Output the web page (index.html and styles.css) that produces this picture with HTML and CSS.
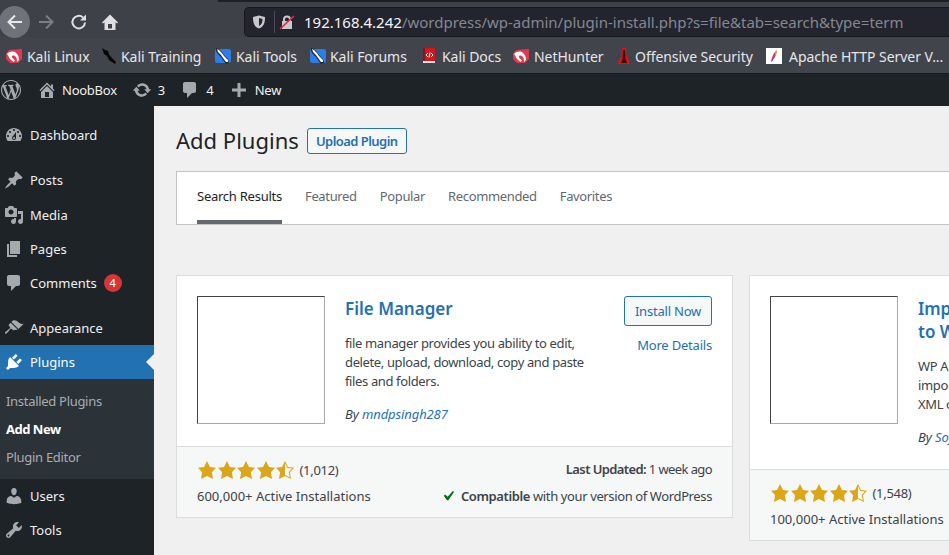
FILE: index.html
```html
<!DOCTYPE HTML>
<html>
	<head>
		<meta charset="utf-8">
		<title>Add Plugins</title>
		<link rel="stylesheet" href="styles.css">
	</head>
	<body>
		<div class="toolbar">
			<div class="nav-btns">
				<span class="back-btn">
					<svg viewBox="0 0 20 20" width="20" height="20"><path d="M17 10H4M10 3.500L3.500 10l6.500 6.500" fill="none" stroke="#e8e8ea" stroke-width="2"/></svg>
				</span>
				<svg class="fwd" viewBox="0 0 20 20" width="20" height="20"><path d="M3 10h13M10 3.500l6.500 6.500-6.500 6.500" fill="none" stroke="#7c7e84" stroke-width="2"/></svg>
				<svg class="reload" viewBox="0 0 20 20" width="20" height="20"><path d="M16 10.500a6.300 6.300 0 1 1-2-5" fill="none" stroke="#e0e0e3" stroke-width="2"/><path d="M17 2.500v6h-6z" fill="#e0e0e3"/></svg>
				<svg class="home" viewBox="0 0 20 20" width="20" height="20"><path d="M10 2.500L2 10.500l1 1 1.500-1.300V18h11v-7.800l1.500 1.300 1-1zM8 16.500V12h4v4.500z" fill="#e0e0e3"/></svg>
			</div>
			<div class="urlbar">
				<svg class="shield" viewBox="0 0 16 16" width="16" height="16"><path d="M8 1.500L2 3c0 6 1 9.500 6 11.500C13 12.500 14 9 14 3zM8 4l3.500.9c0 3.500-.8 5.700-3.500 7z" fill="#c8c8cc" fill-rule="evenodd"/></svg>
				<span class="url-sep"></span>
				<svg class="lock" viewBox="0 0 16 16" width="16" height="16"><path d="M4 7V5.500a4 4 0 0 1 8 0V7h1v8H3V7zM6 7h4V5.500a2 2 0 0 0-4 0z" fill="#c8c8cc" fill-rule="evenodd"/><path d="M1 15L15 2" stroke="#e22850" stroke-width="1.700"/></svg>
				<span class="url"><b>192.168.4.242</b>/wordpress/wp-admin/plugin-install.php?s=file&amp;tab=search&amp;type=term</span>
			</div>
		</div>

		<div class="bookmarks">
			<span class="bm bm-linux"><svg viewBox="0 0 16 16" width="16" height="16"><path d="M3 2l13-1v10l-4 4H4L0 11V6z" fill="#e0394f"/><path d="M1 6c3-3 7-3 9-1 2 1.500 3 4 3 7l-2 2c0-4-1-6-3-6.500C6 7 5 9 7 10.500l2 2-1.500 1.500L4 11c-1.500-2-1.500-3.500-3-5z" fill="#fff"/></svg>Kali Linux</span>
			<span class="bm bm-training"><svg viewBox="0 0 16 16" width="16" height="16"><path d="M1 0l3 2 3 1 1 3 2 3 5 5-1 2-6-4-2-4-3-2-1-3z" fill="#050505"/></svg>Kali Training</span>
			<span class="bm bm-tools"><svg viewBox="0 0 16 16" width="16" height="16"><rect y="1" width="16" height="14" rx="2" fill="#2b7de9"/><path d="M1 0l3 1 3 3 2 3 4 4 1 4-3 1-3-4-2-3-3-3-2-3z" fill="#23262c"/><path d="M2 1l2 1 3 3 2 3 4 4 0 2-2 0-3-4-2-3-3-3z" fill="#fff"/></svg>Kali Tools</span>
			<span class="bm bm-forums"><svg viewBox="0 0 16 16" width="16" height="16"><rect y="1" width="16" height="14" rx="2" fill="#2b7de9"/><path d="M1 0l3 1 3 3 2 3 4 4 1 4-3 1-3-4-2-3-3-3-2-3z" fill="#23262c"/><path d="M2 1l2 1 3 3 2 3 4 4 0 2-2 0-3-4-2-3-3-3z" fill="#fff"/></svg>Kali Forums</span>
			<span class="bm bm-docs"><svg viewBox="0 0 16 16" width="16" height="16"><path d="M2 0h12v13H2z" fill="#d3171f"/><path d="M2 0h2v13H2z" fill="#8e1117"/><path d="M2 13h12v2H2z" fill="#e4e4e6"/><path d="M7 5L5 7l2 2M10 5l2 2-2 2M9 4.500L8 9.500" fill="none" stroke="#fff"/></svg>Kali Docs</span>
			<span class="bm bm-hunter"><svg viewBox="0 0 16 16" width="16" height="16"><path d="M3 2l13-1v10l-4 4H4L0 11V6z" fill="#e0394f"/><path d="M1 6c3-3 7-3 9-1 2 1.500 3 4 3 7l-2 2c0-4-1-6-3-6.500C6 7 5 9 7 10.500l2 2-1.500 1.500L4 11c-1.500-2-1.500-3.500-3-5z" fill="#fff"/></svg>NetHunter</span>
			<span class="bm bm-offsec"><svg viewBox="0 0 16 16" width="16" height="16"><path d="M6 0h4l.5 8L14 14v2H2v-2l3.500-6z" fill="#d9141c"/><path d="M7 2h2l.5 9 1.500 4H5l1.500-4z" fill="#4a0608"/></svg>Offensive Security</span>
			<span class="bm bm-apache"><svg viewBox="0 0 16 16" width="16" height="16"><path d="M0 0h16v16H0z" fill="#fff"/><path d="M11 2C8 4 6 8 5 14c2-2 4.500-5 5-8z" fill="#d9305a"/><path d="M11 2L9 4.500 9 7l2-2z" fill="#f59a23"/><path d="M6.500 10L5 14l2-2z" fill="#7a2a8a"/></svg>Apache HTTP Server V...</span>
		</div>

		<div class="adminbar">
			<svg class="ab-wp" viewBox="0 0 20 20" width="20" height="20"><path d="M20 10c0-5.510-4.490-10-10-10C4.480 0 0 4.490 0 10c0 5.520 4.480 10 10 10 5.510 0 10-4.480 10-10zM7.780 15.370L4.370 6.220c.55-.02 1.170-.08 1.170-.08.5-.06.44-1.130-.06-1.110 0 0-1.450.11-2.370.11-.18 0-.37 0-.58-.01C4.120 2.690 6.870 1.110 10 1.110c2.330 0 4.450.87 6.050 2.340-.68-.11-1.650.39-1.650 1.580 0 .74.45 1.360.9 2.100.35.61.55 1.360.55 2.460 0 1.490-1.400 5-1.400 5l-3.030-8.370c.54-.02.82-.17.82-.17.5-.05.44-1.250-.06-1.220 0 0-1.440.12-2.380.12-.87 0-2.330-.12-2.330-.12-.5-.03-.56 1.200-.06 1.220l.92.08 1.260 3.410zM17.410 10c.24-.64.74-1.870.43-4.250.7 1.290 1.050 2.710 1.050 4.250 0 3.290-1.730 6.240-4.400 7.780.97-2.590 1.940-5.200 2.920-7.780zM6.100 18.090C3.120 16.650 1.110 13.530 1.110 10c0-1.300.23-2.480.72-3.590C3.250 10.300 4.670 14.200 6.100 18.090zm4.030-6.630l2.580 6.980c-.86.29-1.760.45-2.710.45-.79 0-1.570-.11-2.290-.33.81-2.380 1.620-4.740 2.420-7.100z"/></svg>
			<span class="ab-item ab-site"><svg viewBox="0 0 20 20" width="20" height="20"><path d="M16 8.500l1.530 1.530-1.060 1.060L10 4.620l-6.470 6.470-1.060-1.060L10 2.500l4 4v-2h2v4zm-6-2.460l6 5.990V18H4v-5.970zM12 17v-5H8v5h4z"/></svg>NoobBox</span>
			<span class="ab-item ab-updates"><svg viewBox="0 0 20 20" width="20" height="20"><path d="M10.200 3.280c3.530 0 6.430 2.610 6.920 6h2.080l-3.500 4-3.500-4h2.320c-.45-1.970-2.210-3.450-4.320-3.450-1.450 0-2.730.71-3.540 1.780L4.950 5.660C6.230 4.200 8.110 3.280 10.200 3.280zm-.4 13.440c-3.520 0-6.430-2.610-6.920-6H.8l3.500-4c1.170 1.330 2.330 2.670 3.500 4H5.480c.45 1.970 2.210 3.450 4.320 3.450 1.450 0 2.730-.71 3.540-1.780l1.710 1.950c-1.280 1.460-3.150 2.380-5.250 2.380z"/></svg>3</span>
			<span class="ab-item ab-comments"><svg viewBox="0 0 20 20" width="20" height="20"><path d="M5 2h9c1.100 0 2 .9 2 2v7c0 1.100-.9 2-2 2h-2l-5 5v-5H5c-1.100 0-2-.9-2-2V4c0-1.100.9-2 2-2z"/></svg>4</span>
			<span class="ab-item ab-new"><svg viewBox="0 0 20 20" width="20" height="20"><path d="M17 8.500v3h-5.500V17h-3v-5.500H3v-3h5.500V3h3v5.500z"/></svg>New</span>
		</div>

		<div class="wrap">
			<ul class="menu">
				<li class="menu-item sep-after">
					<svg viewBox="0 0 20 20" width="20" height="20"><path d="M3.760 16h12.480c1.100-1.370 1.760-3.110 1.760-5 0-4.420-3.580-8-8-8s-8 3.580-8 8c0 1.890.66 3.630 1.760 5zM10 4c.55 0 1 .45 1 1s-.45 1-1 1-1-.45-1-1 .45-1 1-1zM6 6c.55 0 1 .45 1 1s-.45 1-1 1-1-.45-1-1 .45-1 1-1zm8 0c.55 0 1 .45 1 1s-.45 1-1 1-1-.45-1-1 .45-1 1-1zm-5.370 5.550L12 7v6c0 1.100-.9 2-2 2s-2-.9-2-2c0-.57.24-1.080.63-1.450zM4 10c.55 0 1 .45 1 1s-.45 1-1 1-1-.45-1-1 .45-1 1-1zm12 0c.55 0 1 .45 1 1s-.45 1-1 1-1-.45-1-1 .45-1 1-1zm-5 3c0-.55-.45-1-1-1s-1 .45-1 1 .45 1 1 1 1-.45 1-1z" fill-rule="evenodd"/></svg>
					Dashboard
				</li>
				<li class="menu-item posts">
					<svg viewBox="0 0 20 20" width="20" height="20"><path d="M10.440 3.020l1.820-1.820 6.360 6.350-1.830 1.820c-1.050-.68-2.480-.57-3.410.36l-.75.75c-.92.93-1.040 2.350-.35 3.410l-1.830 1.820-2.410-2.410-2.800 2.790c-.42.42-3.380 2.710-3.800 2.290s1.860-3.390 2.280-3.810l2.790-2.790L4.100 9.360l1.830-1.820c1.050.69 2.480.57 3.400-.36l.75-.75c.93-.92 1.050-2.350.36-3.410z"/></svg>
					Posts
				</li>
				<li class="menu-item">
					<svg viewBox="0 0 20 20" width="20" height="20"><path d="M13 11V4c0-.55-.45-1-1-1h-1.670L9 1H5L3.670 3H2c-.55 0-1 .45-1 1v7c0 .55.45 1 1 1h10c.55 0 1-.45 1-1zM7 4.500c1.380 0 2.500 1.120 2.500 2.500S8.380 9.500 7 9.500 4.500 8.380 4.500 7 5.620 4.500 7 4.500zM14 6h5v10.500c0 1.380-1.120 2.500-2.500 2.500S14 17.880 14 16.500s1.120-2.500 2.500-2.500c.17 0 .34.02.5.05V9h-3V6zm-4 8.050V13h2v3.500c0 1.380-1.120 2.500-2.500 2.500S7 17.880 7 16.500 8.120 14 9.500 14c.17 0 .34.02.5.05z"/></svg>
					Media
				</li>
				<li class="menu-item">
					<svg viewBox="0 0 20 20" width="20" height="20"><path d="M6 15V2h10v13H6zm-1 1h8v2H3V5h2v11z"/></svg>
					Pages
				</li>
				<li class="menu-item sep-after">
					<svg viewBox="0 0 20 20" width="20" height="20"><path d="M5 2h9c1.100 0 2 .9 2 2v7c0 1.100-.9 2-2 2h-2l-5 5v-5H5c-1.100 0-2-.9-2-2V4c0-1.100.9-2 2-2z"/></svg>
					Comments <span class="badge">4</span>
				</li>
				<li class="menu-item">
					<svg viewBox="0 0 20 20" width="20" height="20"><path d="M14.480 11.060L7.410 3.990l1.500-1.500c.5-.56 2.300-.47 3.510.32 1.210.8 1.430 1.280 2.910 2.100 1.180.64 2.450 1.260 4.450.85zm-.71.71L6.700 4.700 4.930 6.470c-.39.39-.39 1.020 0 1.410l1.060 1.060c.39.39.39 1.030 0 1.420-.6.6-1.430 1.110-2.210 1.690-.35.26-.7.53-1.010.84C1.430 13.230.4 14.890 1.100 15.590c.7.7 2.300-.4 3.140-1.730.24-.37.48-.74.71-1.100.39-.61.86-1.190 1.450-1.750.39-.39 1.020-.39 1.410 0l1.060 1.060c.39.39 1.020.39 1.410 0z"/></svg>
					Appearance
				</li>
				<li class="menu-item current">
					<svg viewBox="0 0 20 20" width="20" height="20"><path d="M13.110 4.360L9.870 7.600 8 5.730l3.240-3.240c.35-.34 1.050-.2 1.560.32.52.51.66 1.210.31 1.550zm-8 1.770l.91-1.120 9.010 9.010-1.190.84c-.71.71-2.630 1.160-3.820 1.160H6.140L4.900 17.260c-.59.59-1.540.59-2.120 0-.59-.58-.59-1.530 0-2.120l1.240-1.240v-3.880c0-1.130.4-3.190 1.090-3.890zm7.260 3.970l3.240-3.240c.34-.35 1.040-.21 1.550.31.52.51.66 1.210.31 1.550l-3.240 3.250z"/></svg>
					Plugins
				</li>
				<li class="submenu">
					<a>Installed Plugins</a>
					<a class="active">Add New</a>
					<a>Plugin Editor</a>
				</li>
				<li class="menu-item">
					<svg viewBox="0 0 20 20" width="20" height="20"><path d="M10 9.250c-2.270 0-2.730-3.440-2.730-3.440C7 4.020 7.820 2 9.970 2c2.160 0 2.980 2.020 2.710 3.810 0 0-.41 3.440-2.680 3.440zm0 2.570L12.720 10c2.390 0 4.520 2.330 4.520 4.530v2.490s-3.650 1.130-7.240 1.130c-3.650 0-7.240-1.130-7.240-1.130v-2.490c0-2.250 1.940-4.480 4.470-4.480z"/></svg>
					Users
				</li>
				<li class="menu-item">
					<svg viewBox="0 0 20 20" width="20" height="20"><path d="M16.680 9.770c-1.340 1.340-3.300 1.670-4.950.99l-5.410 6.520c-.99.99-2.590.99-3.580 0s-.99-2.590 0-3.570l6.520-5.420c-.68-1.650-.35-3.610.99-4.950 1.280-1.280 3.120-1.620 4.720-1.060l-2.890 2.890 2.820 2.820 2.860-2.870c.53 1.580.18 3.390-1.080 4.650zM3.810 16.210c.4.39 1.040.39 1.430 0 .4-.4.4-1.040 0-1.430-.39-.4-1.030-.4-1.430 0-.39.39-.39 1.030 0 1.430z"/></svg>
					Tools
				</li>
			</ul>

			<div class="content">
				<div class="heading">
					<h1>Add Plugins</h1>
					<a class="btn-upload">Upload Plugin</a>
				</div>
				<div class="tabs">
					<a class="tab current">Search Results</a>
					<a class="tab">Featured</a>
					<a class="tab">Popular</a>
					<a class="tab">Recommended</a>
					<a class="tab">Favorites</a>
				</div>

				<div class="cards">
					<div class="card">
						<div class="card-top">
							<div class="thumb"></div>
							<div class="card-info">
								<h3>File Manager</h3>
								<p>file manager provides you ability to edit, delete, upload, download, copy and paste files and folders.</p>
								<p class="author">By <a>mndpsingh287</a></p>
							</div>
							<div class="actions">
								<a class="btn-install">Install Now</a>
								<a class="more">More Details</a>
							</div>
						</div>
						<div class="card-bottom">
							<div class="stats">
								<div class="rating">
									<svg viewBox="0 0 20 20"><path d="M10 1l3 6 6 .75-4.120 4.620L16 19l-6-3-6 3 1.130-6.630L1 7.750 7 7z"/></svg>
									<svg viewBox="0 0 20 20"><path d="M10 1l3 6 6 .75-4.120 4.620L16 19l-6-3-6 3 1.130-6.630L1 7.750 7 7z"/></svg>
									<svg viewBox="0 0 20 20"><path d="M10 1l3 6 6 .75-4.120 4.620L16 19l-6-3-6 3 1.130-6.630L1 7.750 7 7z"/></svg>
									<svg viewBox="0 0 20 20"><path d="M10 1l3 6 6 .75-4.120 4.620L16 19l-6-3-6 3 1.130-6.630L1 7.750 7 7z"/></svg>
									<svg viewBox="0 0 20 20"><path d="M10 1L7 7l-6 .75 4.130 4.620L4 19l6-3 6 3-1.120-6.630L19 7.750 13 7zm0 2.240l2.340 4.690 4.650.58-3.180 3.560.87 5.150L10 14.880V3.240z" fill-rule="evenodd"/></svg>
									<span class="count">(1,012)</span>
								</div>
								<div class="installs">600,000+ Active Installations</div>
							</div>
							<div class="meta">
								<div class="updated"><b>Last Updated:</b> 1 week ago</div>
								<div class="compat"><svg viewBox="0 0 20 20" width="20" height="20"><path d="M14.830 4.890l1.340.94-5.810 8.380H9.020L5.780 9.670l1.340-1.250 2.570 2.400z"/></svg><span><b>Compatible</b> with your version of WordPress</span></div>
							</div>
						</div>
					</div>

					<div class="card">
						<div class="card-top">
							<div class="thumb"></div>
							<div class="card-info">
								<h3>Import any XML or CSV File<br>to WordPress</h3>
								<p>WP All Import is an extremely powerful<br>importer that makes it easy to import any<br>XML or CSV file to WordPress.</p>
								<p class="author">By <a>Soflyy</a></p>
							</div>
						</div>
						<div class="card-bottom">
							<div class="stats">
								<div class="rating">
									<svg viewBox="0 0 20 20"><path d="M10 1l3 6 6 .75-4.120 4.620L16 19l-6-3-6 3 1.130-6.630L1 7.750 7 7z"/></svg>
									<svg viewBox="0 0 20 20"><path d="M10 1l3 6 6 .75-4.120 4.620L16 19l-6-3-6 3 1.130-6.630L1 7.750 7 7z"/></svg>
									<svg viewBox="0 0 20 20"><path d="M10 1l3 6 6 .75-4.120 4.620L16 19l-6-3-6 3 1.130-6.630L1 7.750 7 7z"/></svg>
									<svg viewBox="0 0 20 20"><path d="M10 1l3 6 6 .75-4.120 4.620L16 19l-6-3-6 3 1.130-6.630L1 7.750 7 7z"/></svg>
									<svg viewBox="0 0 20 20"><path d="M10 1L7 7l-6 .75 4.130 4.620L4 19l6-3 6 3-1.120-6.630L19 7.750 13 7zm0 2.240l2.340 4.690 4.650.58-3.180 3.560.87 5.150L10 14.880V3.240z" fill-rule="evenodd"/></svg>
									<span class="count">(1,548)</span>
								</div>
								<div class="installs">100,000+ Active Installations</div>
							</div>
						</div>
					</div>
				</div>
			</div>
		</div>
	</body>
</html>
```

FILE: styles.css
```css
* {
	box-sizing: border-box;
}

html, body {
	height: 100%;
}

body {
	margin: 0;
	overflow: hidden;
	display: flex;
	flex-direction: column;
	background: #f0f0f1;
	color: #3c434a;
	font-family: "Noto Sans", sans-serif;
	font-size: 13px;
}

/* browser */
.toolbar {
	height: 37px;
	flex: none;
	display: flex;
	background: #3f4148;
	border-top: 2px solid transparent;
	position: relative;
	z-index: 1;
}

.toolbar::before {
	content: "";
	position: absolute;
	left: 218px;
	right: 0;
	top: -2px;
	height: 2px;
	background: #1f2026;
}

.nav-btns {
	width: 244px;
	padding-top: 5px;
	display: flex;
	align-items: center;
}

.back-btn {
	width: 31px;
	height: 32px;
	flex: none;
	margin-left: -1px;
	border-radius: 50%;
	background: #70727a;
	display: flex;
	align-items: center;
	justify-content: center;
}

.fwd {
	margin-left: 6px;
}

.reload {
	margin-left: 13px;
}

.home {
	margin-left: 11px;
}

.urlbar {
	flex: 1;
	height: 30px;
	margin-top: 5px;
	display: flex;
	align-items: center;
	background: #23242d;
	border: 1px solid #17181d;
	border-right: 0;
	border-radius: 5px 0 0 5px;
	color: #858892;
	font-size: 15px;
	white-space: nowrap;
}

.shield {
	margin-left: 6px;
}

.url-sep {
	width: 1px;
	height: 22px;
	margin: 0 4px 0 7px;
	background: #4a4b54;
}

.url {
	margin-left: 9px;
}

.url b {
	font-weight: 400;
	color: #f4f4f6;
}

.bookmarks {
	height: 37px;
	flex: none;
	display: flex;
	align-items: center;
	padding-top: 2px;
	background: #42444c;
	border-bottom: 1px solid #17181d;
	color: #e6e7ea;
	font-size: 14px;
	letter-spacing: -.05px;
	white-space: nowrap;
}

.bm {
	display: flex;
	align-items: center;
	gap: 5px;
}

.bm-linux { margin-left: 6px; width: 95px; }
.bm-training { width: 114px; gap: 4px; }
.bm-tools { width: 95px; }
.bm-forums { width: 111px; gap: 4px; }
.bm-docs { width: 92px; }
.bm-hunter { width: 103px; }
.bm-offsec { width: 150px; gap: 3px; }
.bm-apache { gap: 7px; }

/* admin bar */
.adminbar {
	height: 32px;
	flex: none;
	display: flex;
	align-items: center;
	background: #1d2327;
	color: #f0f0f1;
	white-space: nowrap;
}

.adminbar svg {
	fill: #a7aaad;
}

.ab-wp {
	margin-left: 1px;
}

.ab-item {
	display: flex;
	align-items: center;
	gap: 6px;
}

.ab-site {
	margin-left: 16px;
	gap: 5px;
	letter-spacing: -.25px;
}

.ab-updates {
	margin-left: 15px;
}

.ab-comments {
	margin-left: 15px;
}

.ab-new {
	margin-left: 15px;
	letter-spacing: -.2px;
}

/* sidebar */
.wrap {
	flex: 1;
	display: flex;
	min-height: 0;
}

.menu {
	width: 154px;
	flex: none;
	margin: 0;
	padding: 12px 0 0;
	list-style: none;
	background: #1d2327;
	color: #f0f0f1;
}

.menu-item {
	height: 34px;
	display: flex;
	align-items: center;
	position: relative;
}

.menu-item svg {
	width: 20px;
	height: 20px;
	margin: 0 6px 0 4px;
	fill: #a7aaad;
	flex: none;
}

.sep-after {
	margin-bottom: 11px;
}

.posts {
	margin-bottom: 1px;
}

.current {
	background: #2271b1;
	color: #fff;
}

.current svg {
	fill: #fff;
}

.current::after {
	content: "";
	position: absolute;
	right: 0;
	top: 9px;
	border: 8px solid transparent;
	border-left: 0;
	border-right-color: #f0f0f1;
}

.badge {
	width: 18px;
	height: 18px;
	margin-left: 7px;
	border-radius: 50%;
	background: #d63638;
	color: #fff;
	font-size: 11px;
	line-height: 18px;
	text-align: center;
}

.submenu {
	height: 100px;
	padding-top: 8px;
	background: #2c3338;
	color: #a9acb0;
	letter-spacing: -.3px;
}

.submenu a {
	display: block;
	height: 28px;
	padding-left: 6px;
	line-height: 28px;
}

.submenu .active {
	color: #fff;
	font-weight: 700;
	letter-spacing: -.5px;
}

/* page */
.content {
	flex: 1;
	min-width: 0;
	padding: 0 0 0 22px;
	overflow: hidden;
}

.heading {
	height: 65px;
	display: flex;
	align-items: center;
	padding: 6px 0 1px;
}

h1 {
	margin: -2px 8px 0 0;
	color: #1d2327;
	font-size: 22px;
	font-weight: 400;
}

.btn-upload {
	width: 100px;
	height: 26px;
	border: 1px solid #2271b1;
	border-radius: 3px;
	background: #f6f7f7;
	color: #2271b1;
	font-weight: 600;
	line-height: 24px;
	letter-spacing: -.55px;
	text-align: center;
}

.tabs {
	height: 54px;
	display: flex;
	gap: 23px;
	padding-left: 20px;
	background: #fff;
	border: 1px solid #c3c4c7;
	border-right: 0;
	letter-spacing: -.35px;
}

.tab {
	padding-top: 15px;
	color: #646970;
	white-space: nowrap;
}

.tab.current {
	background: none;
	color: #1d2327;
	border-bottom: 4px solid #646970;
	letter-spacing: -.25px;
}

.cards {
	display: flex;
	align-items: flex-start;
	gap: 16px;
	margin-top: 50px;
}

.card {
	width: 557px;
	flex: none;
	background: #fff;
	border: 1px solid #dcdcde;
}

.card-top {
	display: flex;
	padding: 20px 20px 22px;
}

.thumb {
	width: 128px;
	height: 128px;
	flex: none;
	background: #fff;
	border: 1px solid;
	border-color: #444 #aaa #aaa #444;
}

.card-info {
	width: 259px;
	flex: none;
	margin-left: 20px;
	letter-spacing: -.37px;
}

h3 {
	margin: 1px 0 0;
	color: #2271b1;
	font-size: 17px;
	font-weight: 600;
	line-height: 23px;
	letter-spacing: 0;
	white-space: nowrap;
}

.card-info p {
	margin: 14px 0 0;
	line-height: 19px;
	white-space: nowrap;
}

.card-info p:not(.author) {
	white-space: normal;
}

.card-info .author {
	margin-top: 14px;
	font-style: italic;
	letter-spacing: -.1px;
}

.author a {
	color: #2271b1;
}

.actions {
	flex: 1;
	display: flex;
	flex-direction: column;
	align-items: flex-end;
	letter-spacing: -.2px;
}

.btn-install {
	width: 88px;
	height: 30px;
	border: 1px solid #2271b1;
	border-radius: 3px;
	background: #f6f7f7;
	color: #2271b1;
	line-height: 28px;
	text-align: center;
}

.more {
	margin-top: 10px;
	color: #2271b1;
}

.card-bottom {
	height: 71px;
	display: flex;
	justify-content: space-between;
	padding: 12px 20px 0;
	background: #f6f7f7;
	border-top: 1px solid #dcdcde;
	white-space: nowrap;
}

.rating {
	display: flex;
	align-items: center;
	height: 22px;
}

.rating svg {
	width: 20px;
	height: 20px;
	margin-right: -.5px;
	fill: #dba617;
}

.count {
	margin-left: 5px;
	letter-spacing: -.3px;
}

.installs {
	margin-top: 4px;
	line-height: 22px;
}

.meta {
	text-align: right;
	letter-spacing: -.38px;
}

.updated {
	line-height: 20px;
	letter-spacing: -.6px;
}

.compat {
	margin-top: 6px;
	line-height: 22px;
	display: flex;
	align-items: center;
	justify-content: flex-end;
	gap: 3px;
}

.compat svg {
	fill: #007017;
}

.meta b {
	font-weight: 600;
}
```
